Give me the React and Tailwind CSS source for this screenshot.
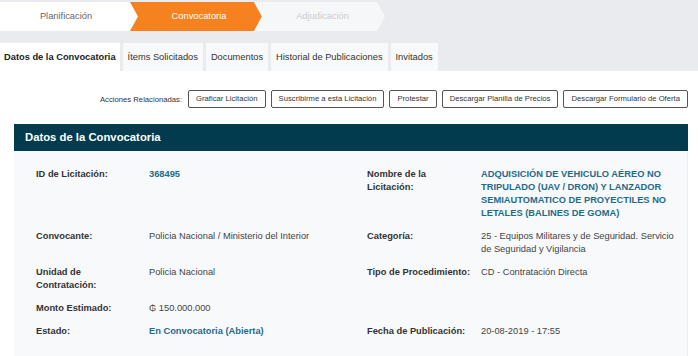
import React from 'react';

const steps = [
    { label: 'Planificación', cls: 'bg-white text-[#666]', w: 'w-[138px]', first: true },
    { label: 'Convocatoria', cls: 'bg-[#f5821f] text-white', w: 'w-[132px]' },
    { label: 'Adjudicación', cls: 'bg-[#f6f7f9] text-[#c9ccd0]', w: 'w-[131px]' },
];

const tabs = ['Datos de la Convocatoria', 'Ítems Solicitados', 'Documentos', 'Historial de Publicaciones', 'Invitados'];

const actions = ['Graficar Licitación', 'Suscribirme a esta Licitación', 'Protestar', 'Descargar Planilla de Precios', 'Descargar Formulario de Oferta'];

function Label({ children }) {
    return <div className="font-bold text-[#333] pr-2">{children}</div>;
}

function App() {
    return (
        <div className="w-[698px] h-[356px] overflow-hidden bg-white text-[9.3px] leading-[13px] text-[#444]" style={{ fontFamily: '"Liberation Sans", Arial, sans-serif' }}>
            {/* barra de etapas + pestañas */}
            <div className="bg-[#e9ebee] pt-[2px]">
                <div className="flex h-[29px]">
                    {steps.map((s, i) => (
                        <div
                            key={s.label}
                            className={`${s.w} ${s.cls} ${i > 0 ? '-ml-[8px]' : ''} flex items-center justify-center shrink-0`}
                            style={{
                                clipPath: s.first
                                    ? 'polygon(0 0, calc(100% - 8px) 0, 100% 50%, calc(100% - 8px) 100%, 0 100%)'
                                    : 'polygon(0 0, calc(100% - 8px) 0, 100% 50%, calc(100% - 8px) 100%, 0 100%, 8px 50%)',
                            }}
                        >
                            <span className={i === 0 ? 'pr-[6px]' : 'pl-[6px]'}>{s.label}</span>
                        </div>
                    ))}
                </div>
                <div className="flex gap-[3px] mt-[12px] h-[28px]">
                    {tabs.map((t, i) => (
                        <div
                            key={t}
                            className={`flex items-center ${i === 0 ? 'bg-white font-bold text-[#222] px-[4px]' : 'bg-[#f8f9fa] text-[#333] px-[5px]'}`}
                        >
                            {t}
                        </div>
                    ))}
                </div>
            </div>

            {/* acciones relacionadas */}
            <div className="flex items-center justify-end gap-[5px] pt-[19px] pr-[10px] text-[7.7px] text-[#333]">
                <span className="mr-[1px]">Acciones Relacionadas:</span>
                {actions.map(a => (
                    <button key={a} className="h-[18px] px-[7px] border border-[#555] rounded-[2px] bg-white leading-none">
                        {a}
                    </button>
                ))}
            </div>

            {/* panel de datos */}
            <div className="ml-[14px] mr-[10px] mt-[16px]">
                <div className="h-[27px] bg-[#023b4e] text-white font-bold text-[11.3px] flex items-center pl-[11px]">
                    Datos de la Convocatoria
                </div>
                <div className="bg-[#f8f9fb] border-r border-[#eceef1] pt-[17px] pl-[22px] pr-[10px] pb-[40px] grid grid-cols-[113px_218px_114px_1fr] gap-y-[10px]">
                    <Label>ID de Licitación:</Label>
                    <div className="font-bold text-[#1f6b8c]">368495</div>
                    <Label>Nombre de la Licitación:</Label>
                    <div className="font-bold text-[#1f6b8c]">ADQUISICIÓN DE VEHICULO AÉREO NO TRIPULADO (UAV / DRON) Y LANZADOR SEMIAUTOMATICO DE PROYECTILES NO LETALES (BALINES DE GOMA)</div>

                    <Label>Convocante:</Label>
                    <div>Policia Nacional / Ministerio del Interior</div>
                    <Label>Categoría:</Label>
                    <div>25 - Equipos Militares y de Seguridad. Servicio de Seguridad y Vigilancia</div>

                    <Label>Unidad de Contratación:</Label>
                    <div>Policia Nacional</div>
                    <Label>Tipo de Procedimiento:</Label>
                    <div>CD - Contratación Directa</div>

                    <Label>Monto Estimado:</Label>
                    <div>₲ 150.000.000</div>
                    <div />
                    <div />

                    <Label>Estado:</Label>
                    <div className="font-bold text-[#1f6b8c]">En Convocatoria (Abierta)</div>
                    <Label>Fecha de Publicación:</Label>
                    <div>20-08-2019 - 17:55</div>
                </div>
            </div>
        </div>
    );
}

export default App;
